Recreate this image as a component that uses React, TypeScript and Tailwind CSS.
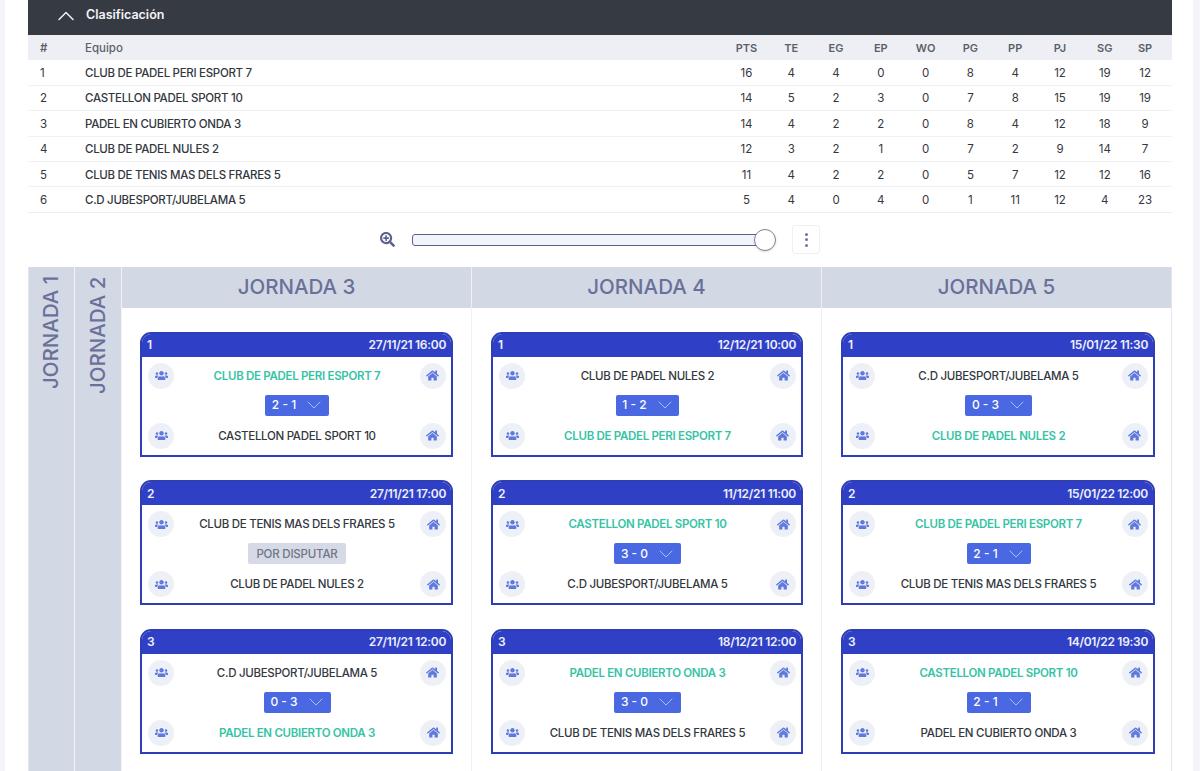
import { ChevronDown, ChevronUp } from "lucide-react";
import { FaHome, FaSearchPlus, FaUsers } from "react-icons/fa";

interface IMatch {
  num: number;
  date: string;
  home: string;
  away: string;
  score: string | null;
  winner?: "home" | "away";
  scoreWidth: string;
}

const standings = [
  ["1", "CLUB DE PADEL PERI ESPORT 7", 16, 4, 4, 0, 0, 8, 4, 12, 19, 12],
  ["2", "CASTELLON PADEL SPORT 10", 14, 5, 2, 3, 0, 7, 8, 15, 19, 19],
  ["3", "PADEL EN CUBIERTO ONDA 3", 14, 4, 2, 2, 0, 8, 4, 12, 18, 9],
  ["4", "CLUB DE PADEL NULES 2", 12, 3, 2, 1, 0, 7, 2, 9, 14, 7],
  ["5", "CLUB DE TENIS MAS DELS FRARES 5", 11, 4, 2, 2, 0, 5, 7, 12, 12, 16],
  ["6", "C.D JUBESPORT/JUBELAMA 5", 5, 4, 0, 4, 0, 1, 11, 12, 4, 23],
];

const statHeads = ["PTS", "TE", "EG", "EP", "WO", "PG", "PP", "PJ", "SG", "SP"];

const rounds: { title: string; pad: string; matches: IMatch[] }[] = [
  {
    title: "JORNADA 3",
    pad: "pl-[18px] pr-[18px]",
    matches: [
      { num: 1, date: "27/11/21 16:00", home: "CLUB DE PADEL PERI ESPORT 7", away: "CASTELLON PADEL SPORT 10", score: "2 - 1", winner: "home", scoreWidth: "w-[64px]" },
      { num: 2, date: "27/11/21 17:00", home: "CLUB DE TENIS MAS DELS FRARES 5", away: "CLUB DE PADEL NULES 2", score: null, scoreWidth: "w-[98px]" },
      { num: 3, date: "27/11/21 12:00", home: "C.D JUBESPORT/JUBELAMA 5", away: "PADEL EN CUBIERTO ONDA 3", score: "0 - 3", winner: "away", scoreWidth: "w-[67px]" },
    ],
  },
  {
    title: "JORNADA 4",
    pad: "pl-[19px] pr-[18px]",
    matches: [
      { num: 1, date: "12/12/21 10:00", home: "CLUB DE PADEL NULES 2", away: "CLUB DE PADEL PERI ESPORT 7", score: "1 - 2", winner: "away", scoreWidth: "w-[63px]" },
      { num: 2, date: "11/12/21 11:00", home: "CASTELLON PADEL SPORT 10", away: "C.D JUBESPORT/JUBELAMA 5", score: "3 - 0", winner: "home", scoreWidth: "w-[67px]" },
      { num: 3, date: "18/12/21 12:00", home: "PADEL EN CUBIERTO ONDA 3", away: "CLUB DE TENIS MAS DELS FRARES 5", score: "3 - 0", winner: "home", scoreWidth: "w-[67px]" },
    ],
  },
  {
    title: "JORNADA 5",
    pad: "pl-[19px] pr-[16px]",
    matches: [
      { num: 1, date: "15/01/22 11:30", home: "C.D JUBESPORT/JUBELAMA 5", away: "CLUB DE PADEL NULES 2", score: "0 - 3", winner: "away", scoreWidth: "w-[67px]" },
      { num: 2, date: "15/01/22 12:00", home: "CLUB DE PADEL PERI ESPORT 7", away: "CLUB DE TENIS MAS DELS FRARES 5", score: "2 - 1", winner: "home", scoreWidth: "w-[64px]" },
      { num: 3, date: "14/01/22 19:30", home: "CASTELLON PADEL SPORT 10", away: "PADEL EN CUBIERTO ONDA 3", score: "2 - 1", winner: "home", scoreWidth: "w-[64px]" },
    ],
  },
];

function TeamRow({ name, won }: { name: string; won: boolean }) {
  return (
    <div className="flex items-center justify-between">
      <span className="flex h-[26px] w-[26px] items-center justify-center rounded-full bg-[#eef0f8] text-[#5f79dc]">
        <FaUsers className="h-[13px] w-[13px]" />
      </span>
      <span className={won ? "pt-[1px] text-[11.5px] font-semibold tracking-[-0.3px] text-[#35c3a5]" : "pt-[1px] text-[11.5px] font-medium tracking-[-0.3px] text-[#333740]"}>{name}</span>
      <span className="flex h-[26px] w-[26px] items-center justify-center rounded-full bg-[#eef0f8] text-[#5f79dc]">
        <FaHome className="h-[13px] w-[13px]" />
      </span>
    </div>
  );
}

function MatchCard({ match }: { match: IMatch }) {
  return (
    <div className="h-[125px] overflow-hidden rounded-t-[11px] border-2 border-[#2f3eb4] bg-white">
      <div className="flex h-[23px] items-center justify-between bg-[#2f40c6] pl-[5px] pr-[5px] text-[12px] font-semibold tracking-[-0.3px] text-[#eef0fb]">
        <span>{match.num}</span>
        <span>{match.date}</span>
      </div>
      <div className="flex flex-col pl-[6px] pr-[5px] pt-[6px]">
        <TeamRow name={match.home} won={match.winner === "home"} />
        <div className="mb-[7px] mt-[6px] flex h-[21px] justify-center">
          {match.score ? (
            <div className={`flex h-[21px] ${match.scoreWidth} items-center justify-center gap-[6px] rounded-[2px] bg-[#4a68e2] pl-[4px] text-[12px] font-medium text-white`}>
              <span>{match.score}</span>
              <ChevronDown className="h-[24px] w-[24px] text-[#c9d3f7]" strokeWidth={0.8} />
            </div>
          ) : (
            <div className={`flex h-[21px] ${match.scoreWidth} items-center justify-center rounded-[2px] bg-[#d5dae6] pt-[1px] text-[11.5px] font-medium tracking-[-0.2px] text-[#6f7585]`}>POR DISPUTAR</div>
          )}
        </div>
        <TeamRow name={match.away} won={match.winner === "away"} />
      </div>
    </div>
  );
}

export default function App() {
  return (
    <div className="h-[771px] overflow-hidden bg-[#f4f5fa] pl-[5px] pr-[7px] font-['Inter',sans-serif]">
      <div className="h-full bg-white pl-[23px] pr-[21px]">
        <div className="flex h-[35px] items-center gap-[6px] bg-[#363a43] pb-[4px] pl-[24px] text-[12.5px] font-semibold text-[#f2f3f6]">
          <ChevronUp className="h-[28px] w-[28px]" strokeWidth={1.25} />
          <span>Clasificación</span>
        </div>

        <table className="w-full table-fixed border-b border-[#eceef3] text-[11.5px] text-[#333740]">
          <colgroup>
            <col className="w-[57px]" />
            <col />
            {statHeads.map((h) => (
              <col key={h} className="w-[44.8px]" />
            ))}
          </colgroup>
          <thead>
            <tr className="h-[25px] bg-[#eeeff5] text-[#5b5f6a]">
              <th className="pl-[12px] pt-[2px] text-left font-semibold">#</th>
              <th className="pt-[2px] text-left font-medium">Equipo</th>
              {statHeads.map((h, i) => (
                <th key={h} className={i === 9 ? "pr-[9px] pt-[2px] text-center text-[11px] font-semibold" : "pt-[2px] text-center text-[11px] font-semibold"}>{h}</th>
              ))}
            </tr>
          </thead>
          <tbody>
            {standings.map((row) => (
              <tr key={row[0]} className="h-[25.4px] border-t border-[#f0f1f5] first:border-t-0">
                <td className="pl-[12px] pt-[2px]">{row[0]}</td>
                <td className="pt-[2px] font-medium tracking-[-0.3px]">{row[1]}</td>
                {row.slice(2).map((v, i) => (
                  <td key={i} className={i === 9 ? "pr-[9px] pt-[2px] text-center" : "pt-[2px] text-center"}>{v}</td>
                ))}
              </tr>
            ))}
          </tbody>
        </table>

        <div className="flex h-[54px] items-center pl-[352px]">
          <FaSearchPlus className="h-[15px] w-[15px] text-[#5c6390]" />
          <div className="relative ml-[17px] h-[12px] w-[353px] rounded-[3px] border border-[#5c6390] bg-[#f2f4fb]">
            <span className="absolute right-[-12px] top-[-6px] h-[22px] w-[22px] rounded-full border border-[#7f8398] bg-white shadow-sm" />
          </div>
          <div className="ml-[27px] flex h-[29px] w-[28px] flex-col items-center justify-center gap-[2.5px] rounded-[3px] border border-[#eff0f4]">
            <span className="h-[3px] w-[3px] rounded-full bg-[#6f74a6]" />
            <span className="h-[3px] w-[3px] rounded-full bg-[#6f74a6]" />
            <span className="h-[3px] w-[3px] rounded-full bg-[#6f74a6]" />
          </div>
        </div>

        <div className="grid grid-cols-[46px_47px_350px_350px_1fr] border-l border-r border-[#e4e6ee]">
          {["JORNADA 1", "JORNADA 2"].map((t) => (
            <div key={t} className="h-[600px] border-r border-[#f2f3f7] bg-[#d3d8e5]">
              <div className="flex h-full w-full rotate-180 items-center justify-end text-[20.5px] font-medium text-[#6a7199] [writing-mode:vertical-rl]">
                <span className="pb-[9px]">{t}</span>
              </div>
            </div>
          ))}
          {rounds.map((r) => (
            <div key={r.title} className="border-r border-[#eef0f4] last:border-r-0">
              <div className="flex h-[41px] items-center justify-center bg-[#d3d8e5] pt-[1px] text-[20.5px] font-medium text-[#6a7199]">{r.title}</div>
              <div className={`flex flex-col gap-[23.5px] ${r.pad} pt-[24px]`}>
                {r.matches.map((m) => (
                  <MatchCard key={m.num} match={m} />
                ))}
              </div>
            </div>
          ))}
        </div>
      </div>
    </div>
  );
}
